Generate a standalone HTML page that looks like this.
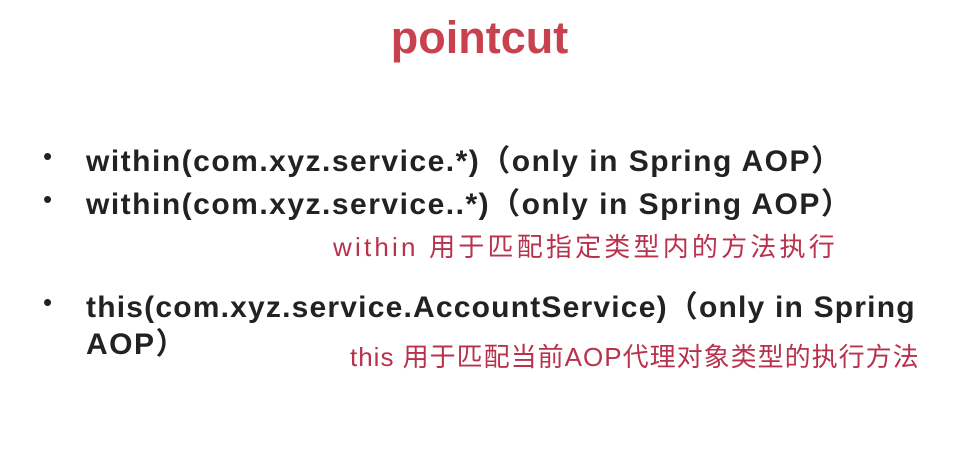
<!DOCTYPE html>
<html><head><meta charset="utf-8"><style>
html,body{margin:0;padding:0;background:#fff;width:959px;height:458px;overflow:hidden;position:relative}
div{position:absolute;white-space:nowrap;font-family:"Liberation Sans","Noto Sans CJK SC",sans-serif}
.t{left:0;width:959px;text-align:center;top:12px;font-size:45px;font-weight:bold;color:#c8414f}
.b{font-size:30px;font-weight:bold;color:#222;letter-spacing:1.5px}
.d{font-size:26px;color:#222;left:43px}
.r{font-size:26px;color:#b8324c;letter-spacing:2px}
</style></head><body>
<div class="t">pointcut</div>
<div class="d" style="top:141px">•</div>
<div class="b" style="left:86px;top:136px">within(com.xyz.service.*)（only in Spring AOP）</div>
<div class="d" style="top:184px">•</div>
<div class="b" style="left:86px;top:179px">within(com.xyz.service..*)（only in Spring AOP）</div>
<div class="r" style="left:333px;top:227px;letter-spacing:3.2px">within 用于匹配指定类型内的方法执行</div>
<div class="d" style="top:287px">•</div>
<div class="b" style="left:86px;top:282px;letter-spacing:1.2px">this(com.xyz.service.AccountService)（only in Spring</div>
<div class="b" style="left:86px;top:319px">AOP）</div>
<div class="r" style="left:350px;top:337px;letter-spacing:1px">this 用于匹配当前AOP代理对象类型的执行方法</div>
</body></html>
